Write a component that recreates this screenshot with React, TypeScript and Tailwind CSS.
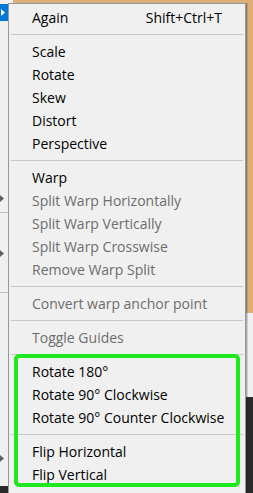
import React from "react";

type Item =
  | { kind: "item"; label: string; disabled?: boolean; shortcut?: string }
  | { kind: "sep" };

const items: Item[] = [
  { kind: "item", label: "Again", shortcut: "Shift+Ctrl+T" },
  { kind: "sep" },
  { kind: "item", label: "Scale" },
  { kind: "item", label: "Rotate" },
  { kind: "item", label: "Skew" },
  { kind: "item", label: "Distort" },
  { kind: "item", label: "Perspective" },
  { kind: "sep" },
  { kind: "item", label: "Warp" },
  { kind: "item", label: "Split Warp Horizontally", disabled: true },
  { kind: "item", label: "Split Warp Vertically", disabled: true },
  { kind: "item", label: "Split Warp Crosswise", disabled: true },
  { kind: "item", label: "Remove Warp Split", disabled: true },
  { kind: "sep" },
  { kind: "item", label: "Convert warp anchor point", disabled: true },
  { kind: "sep" },
  { kind: "item", label: "Toggle Guides", disabled: true },
  { kind: "sep" },
  { kind: "item", label: "Rotate 180°" },
  { kind: "item", label: "Rotate 90° Clockwise" },
  { kind: "item", label: "Rotate 90° Counter Clockwise" },
  { kind: "sep" },
  { kind: "item", label: "Flip Horizontal" },
  { kind: "item", label: "Flip Vertical" },
];

function Arrow({ color }: { color: string }) {
  return (
    <svg width="4" height="7" viewBox="0 0 4 7" className="block">
      <path d="M0 0 L4 3.5 L0 7 Z" fill={color} />
    </svg>
  );
}

export default function App() {
  return (
    <div
      className="relative flex h-[493px] w-[253px] overflow-hidden bg-[#f0f0f0]"
      style={{ fontFamily: '"Open Sans", "Noto Sans", sans-serif' }}
    >
      {/* parent menu strip */}
      <div className="flex w-[8px] shrink-0 flex-col bg-[#f0f0f0]">
        <div className="h-[4px]" />
        <div className="flex h-[17px] items-center bg-[#0078d7] pl-[1px]">
          <Arrow color="#ffffff" />
        </div>
        <div className="h-[173px]" />
        <div className="flex h-[8px] items-center">
          <Arrow color="#606060" />
        </div>
        <div className="h-[10px]" />
        <div className="h-[1px] bg-[#c0c0c0]" />
        <div className="h-[36px]" />
        <div className="flex h-[8px] items-center">
          <Arrow color="#606060" />
        </div>
        <div className="h-[35px]" />
        <div className="h-[1px] bg-[#c0c0c0]" />
        <div className="h-[161px]" />
        <div className="flex h-[8px] items-center">
          <Arrow color="#606060" />
        </div>
        <div className="flex-1" />
        <div className="h-[7px] bg-[#2b2b2b]" />
      </div>

      {/* submenu column */}
      <div className="flex w-[238px] shrink-0 flex-col">
        <div className="flex h-[3px]">
          <div className="w-[5px] bg-[#f0f0f0]" />
          <div className="flex-1 bg-[#dcae78]" />
        </div>
        <div className="flex-1 border-l border-r border-t border-[#979797] bg-[#f0f0f0] pt-[2px] text-[14px] text-black">
          {items.map((it, i) =>
            it.kind === "sep" ? (
              <div key={i} className="h-[11px] pt-[5px] pl-[2px] pr-[2px]">
                <div className="h-[1px] bg-[#c8c8c8]" />
              </div>
            ) : (
              <div
                key={i}
                className={`flex h-[23px] items-center whitespace-nowrap pl-[23px] pr-[23px] leading-[23px] ${
                  it.disabled ? "text-[#6d6d6d]" : "text-[#000000]"
                }`}
              >
                <span>{it.label}</span>
                {it.shortcut && <span className="ml-auto">{it.shortcut}</span>}
              </div>
            )
          )}
        </div>
      </div>

      {/* right background */}
      <div className="flex flex-1 flex-col">
        <div className="h-[3px] bg-[#dcae78]" />
        <div className="flex h-[310px]">
          <div className="w-[1px] bg-[#8c7a64]" />
          <div className="w-[1px] bg-[#b89a74]" />
          <div className="flex-1 bg-[#dcae78]" />
        </div>
        <div className="flex h-[84px]">
          <div className="w-[1px] bg-[#a8a8a8]" />
          <div className="w-[1px] bg-[#d0d0d0]" />
          <div className="flex-1 bg-[#f0f0f0]" />
        </div>
        <div className="flex flex-1">
          <div className="w-[1px] bg-[#222]" />
          <div className="flex-1 bg-[#2b2b2b]" />
        </div>
      </div>

      {/* green highlight annotation */}
      <div className="pointer-events-none absolute left-[14px] top-[354px] h-[133px] w-[226px] rounded-[5px] border-[4px] border-[#1ee81e]" />
    </div>
  );
}
